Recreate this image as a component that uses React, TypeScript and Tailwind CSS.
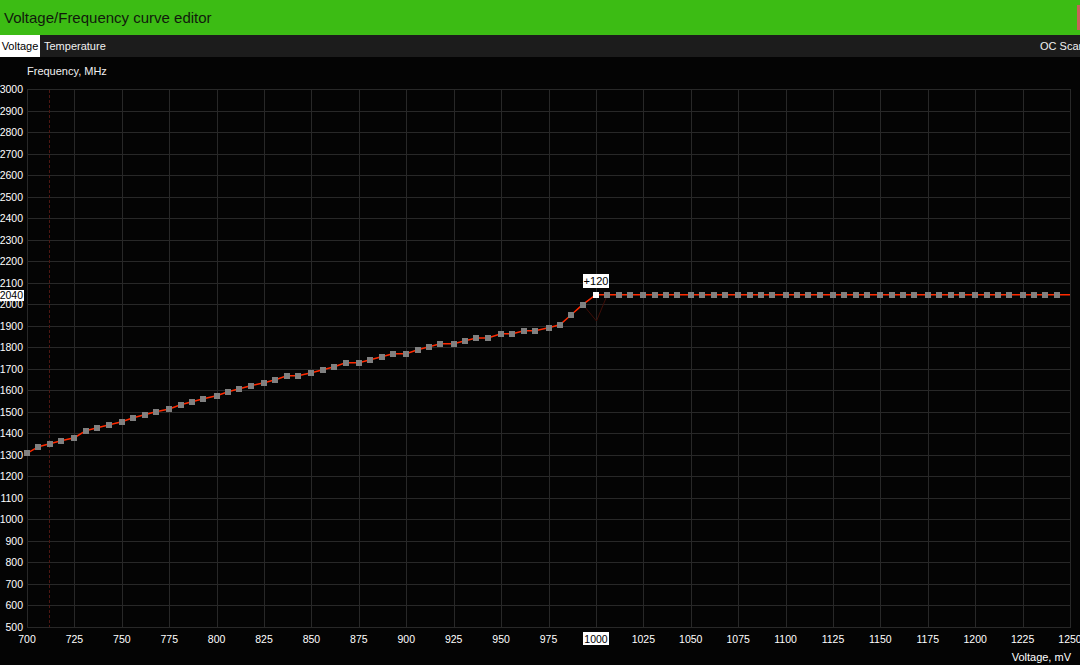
import React from "react";

const GX = (i: number) => 27 + (i * 1043) / 22;
const GY = (j: number) => 89 + (j * 538) / 25;
const px = (v: number) => Math.round(v) + 0.5;

const riseY = [
  453.3, 446.7, 443.7, 440.7, 437.7, 430.7, 427.7, 425, 421.7, 417.7, 414.7, 411.7,
  409, 404.7, 401.7, 398.7, 395.7, 391.7, 388.7, 385.7, 382.7, 379.7, 375.7, 375.7,
  372.7, 369.7, 366.7, 362.7, 362.7, 359.7, 356.7, 353.7, 353.7, 349.7, 346.7, 343.7,
  343.7, 340.7, 338, 338, 333.7, 333.7, 330.7, 330.7, 327.7, 324.7, 314.7, 304.7,
];
const offs = [0, 11.4, 22.8, 34.1];

type P = { x: number; y: number; sel?: boolean };
const points: P[] = [];
riseY.forEach((y, k) => {
  const g = Math.floor(k / 4);
  points.push({ x: GX(g) + offs[k % 4], y });
});
for (let g = 12; g <= 21; g++) {
  for (let k = 0; k < 4; k++) {
    points.push({ x: GX(g) + offs[k], y: 294.7, sel: g === 12 && k === 0 });
  }
}
const linePts = [...points.map((p) => `${p.x},${p.y}`), `1070,294.7`].join(" ");

function Chart() {
  const vLines = Array.from({ length: 23 }, (_, i) => i);
  const hLines = Array.from({ length: 26 }, (_, j) => j);
  return (
    <svg
      width={1080}
      height={576}
      viewBox="0 89 1080 576"
      className="block overflow-visible"
    >
      {vLines.map((i) => (
        <line key={"v" + i} x1={px(GX(i))} x2={px(GX(i))} y1={89} y2={627.5} stroke="#282828" strokeWidth={1} />
      ))}
      {hLines.map((j) => (
        <line key={"h" + j} x1={27} x2={1071} y1={px(GY(j))} y2={px(GY(j))} stroke="#282828" strokeWidth={1} />
      ))}
      <line x1={49.5} x2={49.5} y1={90} y2={627} stroke="#4e1712" strokeWidth={1} strokeDasharray="3 2" />

      {hLines.map((j) => {
        const v = 3000 - j * 100;
        return (
          <text key={"yl" + j} x={23} y={GY(j) + 4} textAnchor="end" fontSize={10.5} fill="#ffffff">
            {v}
          </text>
        );
      })}
      <rect x={0} y={290} width={24} height={11} fill="#ffffff" />
      <text x={23} y={299} textAnchor="end" fontSize={10.5} fill="#000000">
        2040
      </text>

      {vLines.map((i) => {
        const v = 700 + i * 25;
        if (v === 1000) return null;
        return (
          <text key={"xl" + i} x={GX(i)} y={643} textAnchor="middle" fontSize={10.5} fill="#ffffff">
            {v}
          </text>
        );
      })}
      <rect x={583} y={632} width={26} height={13} fill="#ffffff" />
      <text x={596} y={643} textAnchor="middle" fontSize={10.5} fill="#000000">
        1000
      </text>
      <text x={1071} y={661} textAnchor="end" fontSize={11} fill="#ffffff">
        Voltage, mV
      </text>

      <polyline points="583,304.7 596.5,321 607.4,294.7" fill="none" stroke="#3f0e08" strokeWidth={1} />
      <polyline points={linePts} fill="none" stroke="#ff2a00" strokeWidth={1.5} />
      {points.map((p, k) => (
        <rect
          key={"p" + k}
          x={Math.round(p.x - 3)}
          y={Math.round(p.y - 3)}
          width={6}
          height={6}
          fill={p.sel ? "#ffffff" : "#808080"}
        />
      ))}

      <rect x={583} y={274} width={26} height={14} fill="#ffffff" />
      <text x={596} y={285} textAnchor="middle" fontSize={11} fill="#000000">
        +120
      </text>
    </svg>
  );
}

export default function App() {
  return (
    <div className="w-[1080px] h-[665px] overflow-hidden bg-[#040404] font-['Liberation_Sans',Arial,sans-serif] text-white">
      <div className="h-[35px] bg-[#3cbc14] flex items-center justify-between">
        <div className="pl-[4px] text-[15px] text-[#111a0c] leading-none pb-[1px]">
          Voltage/Frequency curve editor
        </div>
        <div className="w-[3px] h-[25px] bg-[#c8615a]" />
      </div>
      <div className="h-[22px] bg-[#1c1c1c] flex items-stretch text-[11px]">
        <div className="w-[40px] bg-white text-black flex items-center justify-center">Voltage</div>
        <div className="pl-[4px] flex items-center text-[#f0f0f0]">Temperature</div>
        <div className="ml-auto w-[40px] flex items-center whitespace-nowrap text-[#f0f0f0]">
          OC Scanner
        </div>
      </div>
      <div className="h-[32px] pl-[27px] pt-[8px] text-[11px] leading-[13px] text-[#f0f0f0]">
        Frequency, MHz
      </div>
      <Chart />
    </div>
  );
}
